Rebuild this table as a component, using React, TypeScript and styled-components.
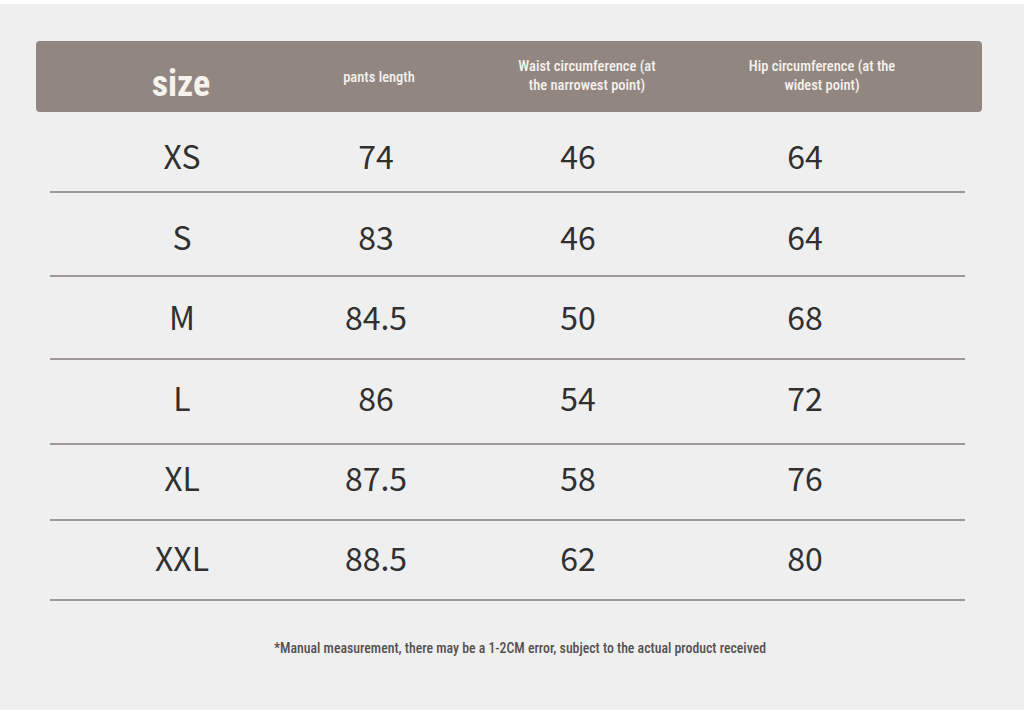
import React from "react";
import styled, { createGlobalStyle } from "styled-components";

const Global = createGlobalStyle`
  html, body { margin: 0; padding: 0; background: #ffffff; }
  #root { width: 1024px; height: 716px; }
`;

const Page = styled.div`
  margin-top: 4px;
  width: 1024px;
  height: 706px;
  background: #efefef;
  box-sizing: border-box;
  padding: 37px 42px 0 36px;
  display: flex;
  flex-direction: column;
`;

const condensed = `"Roboto Condensed", "Liberation Sans Narrow", "DejaVu Sans Condensed", "Noto Sans", sans-serif`;

const HeaderBar = styled.div`
  height: 71px;
  background: #928780;
  border-radius: 4px;
  display: grid;
  grid-template-columns: 290px 106px 310px 160px 1fr;
  align-items: center;
  color: #f6f2ee;
  font-family: ${condensed};
  font-stretch: condensed;
`;

const HeadCell = styled.div<{ $big?: boolean; $shift?: number }>`
  text-align: center;
  font-size: ${(p) => (p.$big ? "36px" : "14.5px")};
  font-weight: ${(p) => (p.$big ? 700 : 500)};
  line-height: ${(p) => (p.$big ? "36px" : "19px")};
  padding-top: ${(p) => (p.$big ? "14px" : "0")};
  margin-top: ${(p) => (p.$shift ?? 0)}px;
  white-space: nowrap;
`;

const Body = styled.div`
  margin: 0 0 0 14px;
  width: 915px;
  display: flex;
  flex-direction: column;
`;

const Row = styled.div<{ $h: number; $pb: number }>`
  height: ${(p) => p.$h}px;
  box-sizing: border-box;
  padding-bottom: ${(p) => p.$pb}px;
  border-bottom: 2px solid #9d9895;
  display: grid;
  grid-template-columns: 264px 124px 280px 174px 1fr;
  align-items: end;
  font-family: "Noto Sans CJK SC", "Noto Sans", sans-serif;
  font-size: 32px;
  color: #303030;
`;

const Cell = styled.div`
  text-align: center;
  line-height: 40px;
  height: 40px;
  white-space: nowrap;
`;

const Note = styled.div`
  margin-top: 39px;
  text-align: center;
  width: 968px;
  font-family: ${condensed};
  font-stretch: condensed;
  font-size: 13.8px;
  font-weight: 500;
  color: #555050;
`;

const rows = [
  { s: "XS", a: "74", b: "46", c: "64", h: 81, pb: 16 },
  { s: "S", a: "83", b: "46", c: "64", h: 84, pb: 19 },
  { s: "M", a: "84.5", b: "50", c: "68", h: 83, pb: 22 },
  { s: "L", a: "86", b: "54", c: "72", h: 85, pb: 26 },
  { s: "XL", a: "87.5", b: "58", c: "76", h: 76, pb: 22 },
  { s: "XXL", a: "88.5", b: "62", c: "80", h: 80, pb: 22 },
];

export default function App() {
  return (
    <>
      <Global />
      <Page>
        <HeaderBar>
          <HeadCell $big>size</HeadCell>
          <HeadCell $shift={1}>pants length</HeadCell>
          <HeadCell $shift={-2}>
            Waist circumference (at
            <br />
            the narrowest point)
          </HeadCell>
          <HeadCell $shift={-2}>
            Hip circumference (at the
            <br />
            widest point)
          </HeadCell>
          <div />
        </HeaderBar>
        <Body>
          {rows.map((r) => (
            <Row key={r.s} $h={r.h} $pb={r.pb}>
              <Cell>{r.s}</Cell>
              <Cell>{r.a}</Cell>
              <Cell>{r.b}</Cell>
              <Cell>{r.c}</Cell>
              <div />
            </Row>
          ))}
        </Body>
        <Note>*Manual measurement, there may be a 1-2CM error, subject to the actual product received</Note>
      </Page>
    </>
  );
}
